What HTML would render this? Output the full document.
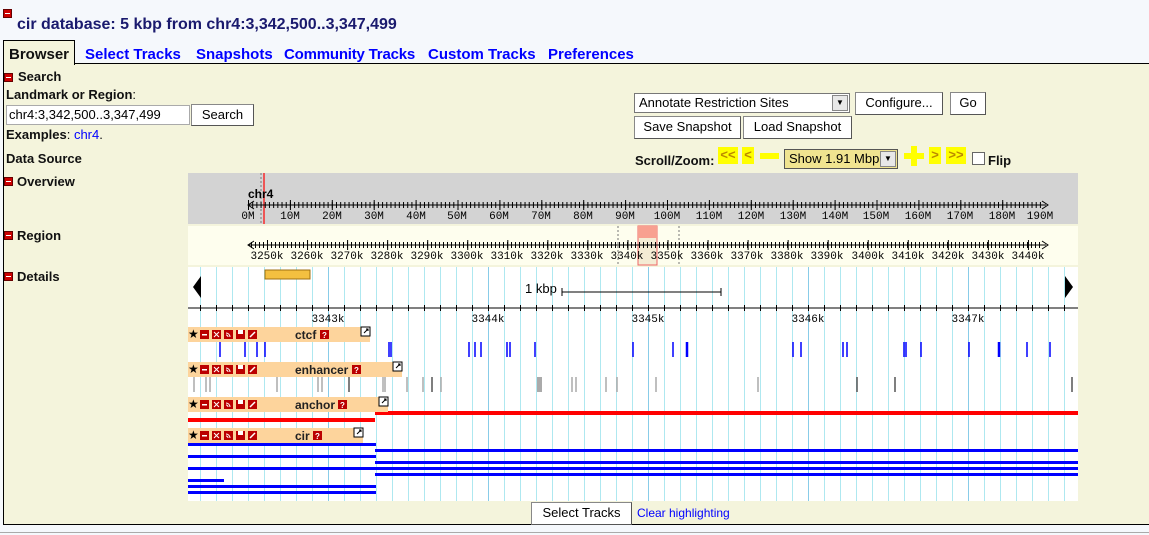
<!DOCTYPE html>
<html><head><meta charset="utf-8">
<style>
*{margin:0;padding:0;box-sizing:border-box}
body{width:1149px;height:535px;background:#f5f8fc;font-family:"Liberation Sans",Arial,sans-serif;position:relative;overflow:hidden}
.a{position:absolute}
.min{position:absolute;width:9px;height:9px;background:#c00;border:1px solid #600}
.min:after{content:"";position:absolute;left:1px;top:3px;width:5px;height:1px;background:#fff}
.tab{position:absolute;top:46px;font-size:15px;font-weight:bold;color:#00f}
.lbl{position:absolute;font-size:13px;font-weight:bold;color:#111}
.btn{position:absolute;background:#fff;border:1px solid #888;border-right-color:#555;border-bottom-color:#555;font-size:13px;color:#000;text-align:center;line-height:20px}
.yb{position:absolute;background:#ff0;}
</style></head><body>
<div class="min" style="left:3px;top:9px"></div>
<div class="a" style="left:17px;top:16px;font-size:16px;font-weight:bold;color:#1a1a6e">cir database: 5 kbp from chr4:3,342,500..3,347,499</div>

<div class="a" style="left:3px;top:63px;width:1146px;height:462px;background:#f4f4dc;border-left:1px solid #000;border-bottom:1px solid #000;border-top:1px solid #000"></div>
<div class="a" style="left:0;top:532px;width:1149px;height:1px;background:#aaa"></div>
<div class="a" style="left:3px;top:40px;width:72px;height:25px;background:#f4f4dc;border:1px solid #000;border-bottom:none"></div>
<div class="tab" style="left:9px;color:#111">Browser</div>
<div class="tab" style="left:85px">Select Tracks</div>
<div class="tab" style="left:196px">Snapshots</div>
<div class="tab" style="left:284px;letter-spacing:-0.2px">Community Tracks</div>
<div class="tab" style="left:428px">Custom Tracks</div>
<div class="tab" style="left:548px">Preferences</div>

<div class="min" style="left:4px;top:73px"></div><div class="lbl" style="left:18px;top:69px">Search</div>
<div class="lbl" style="left:6px;top:87px">Landmark or Region<span style="font-weight:normal">:</span></div>
<div class="a" style="left:6px;top:105px;width:184px;height:20px;background:#fff;border:1px solid #aaa;font-size:13px;line-height:18px;padding-left:2px">chr4:3,342,500..3,347,499</div>
<div class="btn" style="left:191px;top:104px;width:63px;height:22px">Search</div>
<div class="lbl" style="left:6px;top:127px">Examples<span style="font-weight:normal">: <span style="color:#00f">chr4</span>.</span></div>
<div class="lbl" style="left:6px;top:151px">Data Source</div>
<div class="min" style="left:4px;top:177px"></div><div class="lbl" style="left:17px;top:174px">Overview</div>
<div class="min" style="left:4px;top:231px"></div><div class="lbl" style="left:17px;top:228px">Region</div>
<div class="min" style="left:4px;top:272px"></div><div class="lbl" style="left:17px;top:269px">Details</div>

<div class="a" style="left:634px;top:93px;width:216px;height:20px;background:#fff;border:1px solid #777;font-size:13px;line-height:18px;padding-left:4px">Annotate Restriction Sites</div>
<div class="a" style="left:832px;top:95px;width:16px;height:16px;background:#e8e8e8;border:1px solid #888;font-size:8px;text-align:center;line-height:14px">▼</div>
<div class="btn" style="left:855px;top:92px;width:88px;height:23px">Configure...</div>
<div class="btn" style="left:950px;top:92px;width:36px;height:23px">Go</div>
<div class="btn" style="left:634px;top:116px;width:107px;height:23px">Save Snapshot</div>
<div class="btn" style="left:743px;top:116px;width:109px;height:23px">Load Snapshot</div>
<div class="lbl" style="left:635px;top:153px">Scroll/Zoom:</div>
<div class="yb" style="left:718px;top:147px;width:20px;height:17px;color:#b80;font-size:13px;line-height:15px;text-align:center;font-weight:bold">&lt;&lt;</div>
<div class="yb" style="left:742px;top:147px;width:12px;height:17px;color:#b80;font-size:13px;line-height:15px;text-align:center;font-weight:bold">&lt;</div>
<div class="yb" style="left:760px;top:153px;width:19px;height:6px"></div>
<div class="a" style="left:784px;top:149px;width:114px;height:20px;background:#f0e490;border:1px solid #555;font-size:13px;line-height:18px;padding-left:4px">Show 1.91 Mbp</div>
<div class="a" style="left:880px;top:151px;width:16px;height:16px;background:#e8e8e8;border:1px solid #888;font-size:8px;text-align:center;line-height:14px">▼</div>
<div class="yb" style="left:904px;top:153px;width:20px;height:6px"></div><div class="yb" style="left:911px;top:146px;width:6px;height:20px"></div>
<div class="yb" style="left:929px;top:147px;width:12px;height:17px;color:#b80;font-size:13px;line-height:15px;text-align:center;font-weight:bold">&gt;</div>
<div class="yb" style="left:946px;top:147px;width:20px;height:17px;color:#b80;font-size:13px;line-height:15px;text-align:center;font-weight:bold">&gt;&gt;</div>
<div class="a" style="left:972px;top:152px;width:13px;height:13px;background:#fff;border:1px solid #666"></div>
<div class="lbl" style="left:988px;top:153px">Flip</div>

<svg class="a" style="left:0;top:0" width="1149" height="535" font-family="Liberation Mono,monospace">
<rect x="188" y="173" width="890" height="51" fill="#d3d3d3"/>
<line x1="261" y1="173" x2="261" y2="224" stroke="#777" stroke-dasharray="2 2"/>
<rect x="263" y="173" width="2" height="51" fill="#e55"/>
<text x="248" y="198" font-size="12" font-weight="bold" font-family="Liberation Sans">chr4</text>
<line x1="248" y1="205" x2="1046" y2="205" stroke="#000"/>
<path d="M254 201 L248 205 L254 209 M1042 201 L1048 205 L1042 209" stroke="#000" fill="none"/>
<line x1="248" y1="205" x2="1041" y2="205" stroke="#000" stroke-width="6" stroke-dasharray="1 3.19"/>
<line x1="248" y1="205" x2="1041" y2="205" stroke="#000" stroke-width="10" stroke-dasharray="1 40.9"/>
<g font-size="11" text-anchor="middle"><text x="248" y="219">0M</text><text x="290" y="219">10M</text><text x="332" y="219">20M</text><text x="374" y="219">30M</text><text x="416" y="219">40M</text><text x="457" y="219">50M</text><text x="499" y="219">60M</text><text x="541" y="219">70M</text><text x="583" y="219">80M</text><text x="625" y="219">90M</text><text x="667" y="219">100M</text><text x="709" y="219">110M</text><text x="751" y="219">120M</text><text x="793" y="219">130M</text><text x="835" y="219">140M</text><text x="876" y="219">150M</text><text x="918" y="219">160M</text><text x="960" y="219">170M</text><text x="1002" y="219">180M</text><text x="1040" y="219">190M</text></g>
<rect x="188" y="226" width="890" height="39" fill="#fefeee"/>
<line x1="618" y1="226" x2="618" y2="265" stroke="#777" stroke-dasharray="2 2"/>
<line x1="679" y1="226" x2="679" y2="265" stroke="#777" stroke-dasharray="2 2"/>
<rect x="638" y="226" width="19" height="39" fill="#f4ecd4" stroke="#e66"/>
<rect x="638" y="226" width="19" height="12" fill="#f8a090"/>
<line x1="248" y1="245" x2="1046" y2="245" stroke="#000"/>
<path d="M254 241 L248 245 L254 249 M1042 241 L1048 245 L1042 249" stroke="#000" fill="none"/>
<line x1="251" y1="245" x2="1041" y2="245" stroke="#000" stroke-width="6" stroke-dasharray="1 3"/>
<line x1="267" y1="245" x2="1041" y2="245" stroke="#000" stroke-width="10" stroke-dasharray="1 39.05"/>
<g font-size="11" text-anchor="middle"><text x="267" y="259">3250k</text><text x="307" y="259">3260k</text><text x="347" y="259">3270k</text><text x="387" y="259">3280k</text><text x="427" y="259">3290k</text><text x="467" y="259">3300k</text><text x="507" y="259">3310k</text><text x="547" y="259">3320k</text><text x="587" y="259">3330k</text><text x="627" y="259">3340k</text><text x="667" y="259">3350k</text><text x="707" y="259">3360k</text><text x="747" y="259">3370k</text><text x="787" y="259">3380k</text><text x="827" y="259">3390k</text><text x="868" y="259">3400k</text><text x="908" y="259">3410k</text><text x="948" y="259">3420k</text><text x="988" y="259">3430k</text><text x="1028" y="259">3440k</text></g>
<rect x="188" y="267" width="890" height="234" fill="#fff"/>
<line x1="200" y1="384" x2="1078" y2="384" stroke="#aee8f0" stroke-width="234" stroke-dasharray="1 15"/>
<line x1="328" y1="384" x2="1078" y2="384" stroke="#88cce8" stroke-width="234" stroke-dasharray="1 159"/>
<path d="M193 287 L201 276 L201 298 Z M1073 287 L1065 276 L1065 298 Z" fill="#000"/>
<rect x="265" y="270" width="45" height="9" fill="#f4c040" stroke="#a07010"/>
<text x="525" y="293" font-size="13" font-family="Liberation Sans">1 kbp</text>
<path d="M562 288 V296 M562 292 H721 M721 288 V296" stroke="#000"/>
<line x1="188" y1="308" x2="1078" y2="308" stroke="#000"/>
<line x1="200" y1="308" x2="1078" y2="308" stroke="#000" stroke-width="6" stroke-dasharray="1 15"/>
<g font-size="11" text-anchor="middle"><text x="328" y="322">3343k</text><text x="488" y="322">3344k</text><text x="648" y="322">3345k</text><text x="808" y="322">3346k</text><text x="968" y="322">3347k</text></g>
<g stroke="#00f" stroke-width="1.5"><path d="M220 342v15M245 342v15M257 342v15M265 342v15M389 342v15M391 342v15M469 342v15M475 342v15M481 342v15M507 342v15M510 342v15M535 342v15M633 342v15M673 342v15M793 342v15M801 342v15M843 342v15M847 342v15M904 342v15M906 342v15M921 342v15M969 342v15M1027 342v15M1050 342v15"/><path d="M687 342v15M999 342v15" stroke-width="2.5"/></g>
<g stroke="#aaa" stroke-width="1.5"><path d="M194 377v15M206 377v15M210 377v15M277 377v15M318 377v15M322 377v15M383 377v15M385 377v15M407 377v15M423 377v15M441 377v15M572 377v15M576 377v15M606 377v15M617 377v15M656 377v15M758 377v15"/><rect x="537" y="377" width="5" height="15" fill="#aaa" stroke="none"/><path d="M349 377v15M432 377v15M857 377v15M895 377v15M1072 377v15" stroke="#555"/></g>
<rect x="188" y="418" width="187" height="4" fill="#f00"/><rect x="375" y="411" width="703" height="4" fill="#f00"/>
<g fill="#00f"><rect x="188" y="443" width="188" height="3"/><rect x="188" y="455" width="188" height="3"/><rect x="188" y="467" width="890" height="3"/><rect x="188" y="479" width="36" height="3"/><rect x="188" y="485" width="188" height="3"/><rect x="188" y="491" width="188" height="3"/><rect x="375" y="449" width="703" height="3"/><rect x="375" y="461" width="703" height="3"/><rect x="375" y="473" width="703" height="3"/></g>
<g fill="#fdd49c"><rect x="188" y="327" width="182" height="15"/><rect x="188" y="362" width="214" height="15"/><rect x="188" y="397" width="200" height="15"/><rect x="188" y="428" width="175" height="15"/></g>
<g font-family="Liberation Sans" font-size="12" font-weight="bold" fill="#222"><text x="295" y="339">ctcf</text><text x="295" y="374">enhancer</text><text x="295" y="409">anchor</text><text x="295" y="440">cir</text></g>
</svg>
<div class="a" style="left:188px;top:327px;font-size:12px;line-height:15px">★</div>
<div class="a" style="left:188px;top:362px;font-size:12px;line-height:15px">★</div>
<div class="a" style="left:188px;top:397px;font-size:12px;line-height:15px">★</div>
<div class="a" style="left:188px;top:428px;font-size:12px;line-height:15px">★</div>
<svg class="a" style="left:0;top:0" width="1149" height="535">
<g transform="translate(200,330)"><rect width="9" height="9" fill="#b00"/><rect x="2" y="4" width="5" height="1.5" fill="#fff"/><rect x="12" width="9" height="9" fill="#b00"/><path d="M14 2l5 5M19 2l-5 5" stroke="#fff"/><rect x="24" width="9" height="9" fill="#b00"/><path d="M26 3a4 4 0 0 1 4 4M26 5a2 2 0 0 1 2 2" stroke="#fff" fill="none"/><rect x="36" width="9" height="9" fill="#b00"/><rect x="38" y="0" width="5" height="4" fill="#fff"/><rect x="48" width="9" height="9" fill="#b00"/><path d="M50 7l5-5" stroke="#fff" stroke-width="1.5"/><rect x="120" y="0" width="9" height="9" fill="#b00"/><text x="122" y="8" font-size="8" fill="#fff" font-family="Liberation Sans" font-weight="bold">?</text></g>
<g transform="translate(200,365)"><rect width="9" height="9" fill="#b00"/><rect x="2" y="4" width="5" height="1.5" fill="#fff"/><rect x="12" width="9" height="9" fill="#b00"/><path d="M14 2l5 5M19 2l-5 5" stroke="#fff"/><rect x="24" width="9" height="9" fill="#b00"/><path d="M26 3a4 4 0 0 1 4 4M26 5a2 2 0 0 1 2 2" stroke="#fff" fill="none"/><rect x="36" width="9" height="9" fill="#b00"/><rect x="38" y="0" width="5" height="4" fill="#fff"/><rect x="48" width="9" height="9" fill="#b00"/><path d="M50 7l5-5" stroke="#fff" stroke-width="1.5"/><rect x="152" y="0" width="9" height="9" fill="#b00"/><text x="154" y="8" font-size="8" fill="#fff" font-family="Liberation Sans" font-weight="bold">?</text></g>
<g transform="translate(200,400)"><rect width="9" height="9" fill="#b00"/><rect x="2" y="4" width="5" height="1.5" fill="#fff"/><rect x="12" width="9" height="9" fill="#b00"/><path d="M14 2l5 5M19 2l-5 5" stroke="#fff"/><rect x="24" width="9" height="9" fill="#b00"/><path d="M26 3a4 4 0 0 1 4 4M26 5a2 2 0 0 1 2 2" stroke="#fff" fill="none"/><rect x="36" width="9" height="9" fill="#b00"/><rect x="38" y="0" width="5" height="4" fill="#fff"/><rect x="48" width="9" height="9" fill="#b00"/><path d="M50 7l5-5" stroke="#fff" stroke-width="1.5"/><rect x="138" y="0" width="9" height="9" fill="#b00"/><text x="140" y="8" font-size="8" fill="#fff" font-family="Liberation Sans" font-weight="bold">?</text></g>
<g transform="translate(200,431)"><rect width="9" height="9" fill="#b00"/><rect x="2" y="4" width="5" height="1.5" fill="#fff"/><rect x="12" width="9" height="9" fill="#b00"/><path d="M14 2l5 5M19 2l-5 5" stroke="#fff"/><rect x="24" width="9" height="9" fill="#b00"/><path d="M26 3a4 4 0 0 1 4 4M26 5a2 2 0 0 1 2 2" stroke="#fff" fill="none"/><rect x="36" width="9" height="9" fill="#b00"/><rect x="38" y="0" width="5" height="4" fill="#fff"/><rect x="48" width="9" height="9" fill="#b00"/><path d="M50 7l5-5" stroke="#fff" stroke-width="1.5"/><rect x="113" y="0" width="9" height="9" fill="#b00"/><text x="115" y="8" font-size="8" fill="#fff" font-family="Liberation Sans" font-weight="bold">?</text></g>
<g fill="#fff" stroke="#000"><rect x="361" y="327" width="9" height="9"/><rect x="393" y="362" width="9" height="9"/><rect x="379" y="397" width="9" height="9"/><rect x="354" y="428" width="9" height="9"/></g>
<g stroke="#000" fill="none"><path d="M364 333l4-4M366 329h2v2"/><path d="M396 368l4-4M398 364h2v2"/><path d="M382 403l4-4M384 399h2v2"/><path d="M357 434l4-4M359 430h2v2"/></g>
</svg>

<div class="btn" style="left:531px;top:502px;width:101px;height:23px">Select Tracks</div>
<div class="a" style="left:637px;top:506px;font-size:12px;color:#00f">Clear highlighting</div>
</body></html>
